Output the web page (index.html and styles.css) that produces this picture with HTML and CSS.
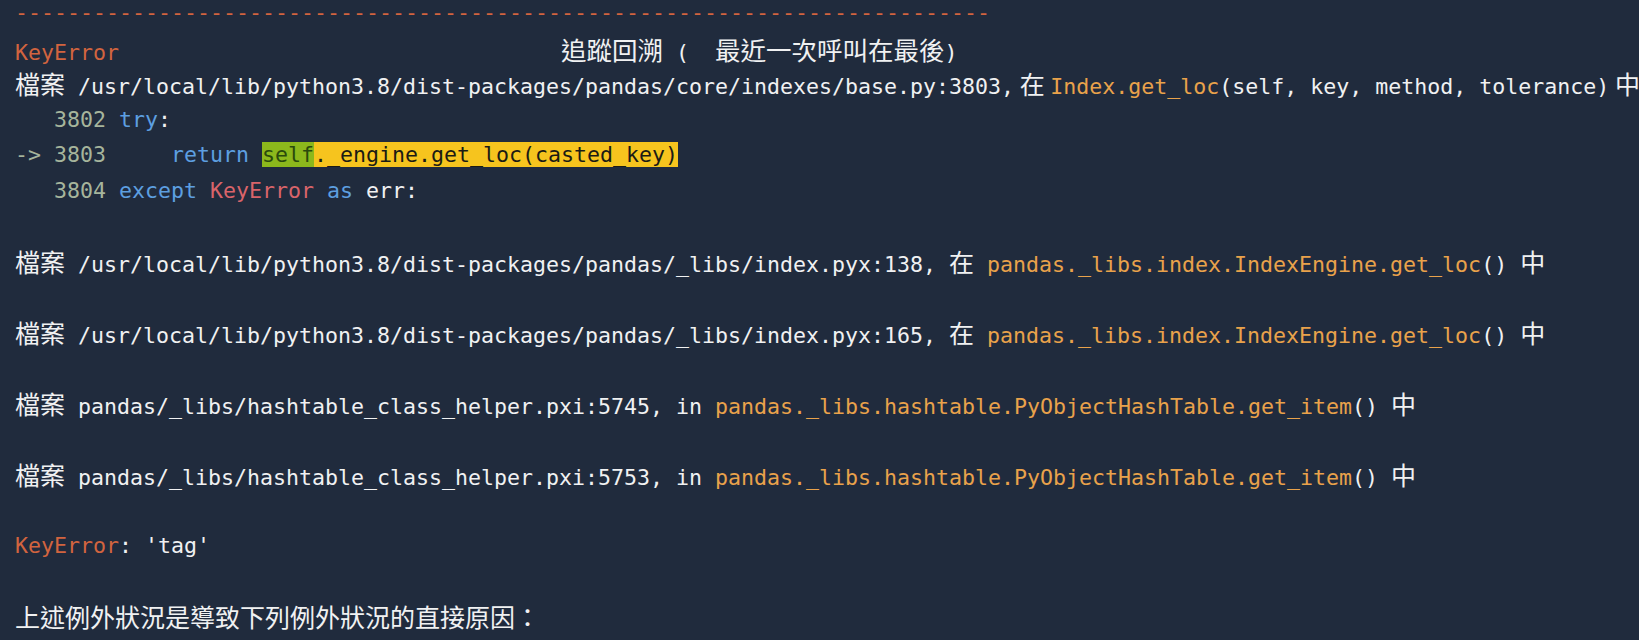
FILE: index.html
```html
<!DOCTYPE html>
<html lang="zh-Hant">
<head>
<meta charset="utf-8">
<title>Traceback</title>
<link rel="stylesheet" href="styles.css">
</head>
<body>
<div class="out">
<div class="ln red">---------------------------------------------------------------------------</div>
<div class="ln"><span class="red">KeyError</span>                                  <span class="zh head">追蹤回溯</span> (  <span class="zh head">最近一次呼叫在最後</span>)</div>
<div class="ln"><span class="zh">檔案</span> /usr/local/lib/python3.8/dist-packages/pandas/core/indexes/base.py:3803,<span class="zh"> 在 </span><span class="fn">Index.get_loc</span>(self, key, method, tolerance)<span class="zh"> 中</span></div>
<div class="ln"><span class="num">   3802</span> <span class="kw">try</span>:</div>
<div class="ln"><span class="num">-&gt; 3803</span>     <span class="kw">return</span> <span class="hl"><span class="hl-self">self</span>._engine.get_loc(casted_key)</span></div>
<div class="ln"><span class="num">   3804</span> <span class="kw">except</span> <span class="exc">KeyError</span> <span class="kw">as</span> err:</div>
<div class="ln"></div>
<div class="ln"><span class="zh">檔案</span> /usr/local/lib/python3.8/dist-packages/pandas/_libs/index.pyx:138, <span class="zh">在</span> <span class="fn">pandas._libs.index.IndexEngine.get_loc</span>() <span class="zh">中</span></div>
<div class="ln"></div>
<div class="ln"><span class="zh">檔案</span> /usr/local/lib/python3.8/dist-packages/pandas/_libs/index.pyx:165, <span class="zh">在</span> <span class="fn">pandas._libs.index.IndexEngine.get_loc</span>() <span class="zh">中</span></div>
<div class="ln"></div>
<div class="ln"><span class="zh">檔案</span> pandas/_libs/hashtable_class_helper.pxi:5745, in <span class="fn">pandas._libs.hashtable.PyObjectHashTable.get_item</span>() <span class="zh">中</span></div>
<div class="ln"></div>
<div class="ln"><span class="zh">檔案</span> pandas/_libs/hashtable_class_helper.pxi:5753, in <span class="fn">pandas._libs.hashtable.PyObjectHashTable.get_item</span>() <span class="zh">中</span></div>
<div class="ln"></div>
<div class="ln"><span class="red">KeyError</span>: 'tag'</div>
<div class="ln"></div>
<div class="ln"><span class="zh">上述例外狀況是導致下列例外狀況的直接原因：</span></div>
</div>
</body>
</html>
```

FILE: styles.css
```css
html, body {
  margin: 0;
  padding: 0;
  background: #202b3d;
  overflow: hidden;
}

.out {
  margin-top: -5px;
  padding-left: 15px;
  font-family: "DejaVu Sans Mono", "Noto Sans CJK TC", monospace;
  font-size: 21.6px;
  color: #f0f1f2;
}

.ln {
  height: 35.5px;
  line-height: 35.5px;
  white-space: pre;
}

.zh {
  font-family: "Noto Sans CJK TC", sans-serif;
  font-size: 25px;
}

.zh.head {
  font-size: 25.5px;
}

.red { color: #d2643f; }
.fn { color: #e9a24b; }
.kw { color: #5d9fe0; }
.num { color: #a6b59c; }
.exc { color: #d9646a; }

.hl {
  background: #f6c41e;
  color: #1b1b14;
}

.hl-self {
  background: #8cb81c;
  color: #2a4a0c;
}
```
